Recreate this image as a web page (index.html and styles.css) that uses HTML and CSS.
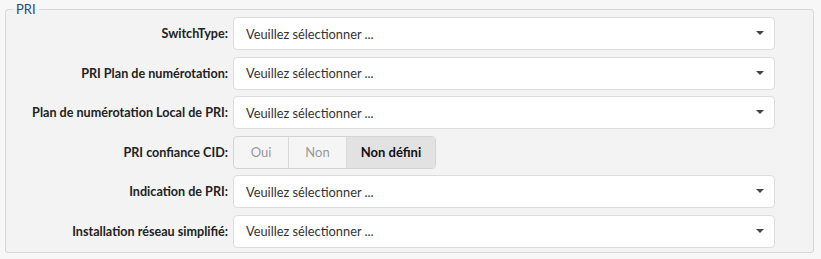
FILE: index.html
```html
<!DOCTYPE html>
<html lang="fr">
<head>
  <meta charset="UTF-8" />
  <title>PRI</title>
  <link rel="stylesheet" href="styles.css">
</head>
<body>
  <fieldset class="panel">
    <legend>PRI</legend>

    <div class="row">
      <label>SwitchType:</label>
      <div class="select"><span>Veuillez sélectionner ...</span><i class="caret"></i></div>
    </div>

    <div class="row">
      <label>PRI Plan de numérotation:</label>
      <div class="select"><span>Veuillez sélectionner ...</span><i class="caret"></i></div>
    </div>

    <div class="row">
      <label>Plan de numérotation Local de PRI:</label>
      <div class="select"><span>Veuillez sélectionner ...</span><i class="caret"></i></div>
    </div>

    <div class="row">
      <label>PRI confiance CID:</label>
      <div class="toggle">
        <button class="opt opt-oui">Oui</button>
        <button class="opt opt-non">Non</button>
        <button class="opt opt-undef active">Non défini</button>
      </div>
    </div>

    <div class="row">
      <label>Indication de PRI:</label>
      <div class="select"><span>Veuillez sélectionner ...</span><i class="caret"></i></div>
    </div>

    <div class="row">
      <label>Installation réseau simplifié:</label>
      <div class="select"><span>Veuillez sélectionner ...</span><i class="caret"></i></div>
    </div>
  </fieldset>
</body>
</html>
```

FILE: styles.css
```css
body {
  margin: 0;
  background-color: #f7f7f7;
  font-family: Lato, 'Open Sans', sans-serif;
  font-size: 13px;
  color: #333;
}

.panel {
  margin: 1px 5px 0 5px;
  padding: 0 0 4px 0;
  width: 809px;
  box-sizing: border-box;
  border: 1px solid #d8d8d8;
  border-radius: 3px;
  background: #f3f3f3;
  display: flex;
  flex-direction: column;
  gap: 6.6px;
}

.panel legend {
  margin-left: 7px;
  padding: 0 3px;
  line-height: 16px;
  color: #2b4a7a;
  font-size: 13px;
}

.row {
  display: grid;
  grid-template-columns: 222px 542px;
  column-gap: 5px;
  align-items: center;
  height: 33px;
}

.row label {
  text-align: right;
  font-weight: bold;
  font-size: 12.6px;
  color: #222;
}

.select {
  height: 33px;
  box-sizing: border-box;
  border: 1px solid #dcdcdc;
  border-radius: 4px;
  background: #fff;
  display: flex;
  align-items: center;
  justify-content: space-between;
  padding: 0 10px 0 12px;
  color: #333;
  font-size: 12.8px;
}

.caret {
  width: 0;
  height: 0;
  border-left: 4px solid transparent;
  border-right: 4px solid transparent;
  border-top: 4px solid #444;
  margin-top: -1px;
}

.toggle {
  display: flex;
  width: 203px;
  height: 33px;
  box-sizing: border-box;
  border: 1px solid #d4d4d4;
  border-radius: 4px;
  overflow: hidden;
  background: #f5f5f5;
}

.opt {
  font-family: inherit;
  font-size: 13px;
  border: none;
  border-right: 1px solid #d9d9d9;
  background: transparent;
  color: #999;
  padding: 0;
  cursor: pointer;
}

.opt-oui {
  width: 55px;
}

.opt-non {
  width: 58px;
}

.opt-undef {
  flex: 1;
  border-right: none;
}

.opt.active {
  background: #e2e2e2;
  color: #111;
  font-weight: bold;
}
```
